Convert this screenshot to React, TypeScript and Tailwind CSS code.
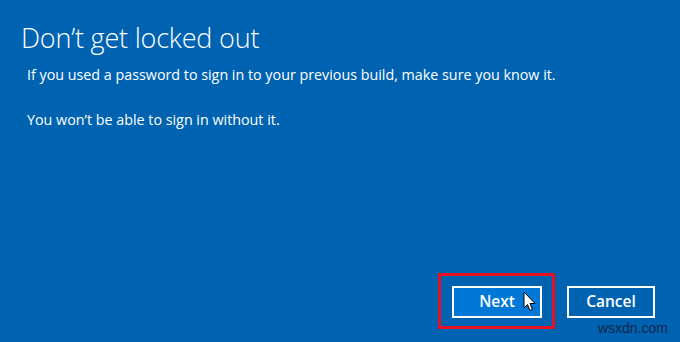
import React from "react";

export default function App() {
  return (
    <div
      className="relative w-[680px] h-[342px] bg-[#0063b1] text-white overflow-hidden flex flex-col"
      style={{ fontFamily: '"Open Sans", "Noto Sans", sans-serif' }}
    >
      <div className="pl-[21px] pt-[19px]">
        <h1 className="text-[27px] leading-[38px] font-light tracking-[-0.2px]">Don’t get locked out</h1>
      </div>
      <div className="pl-[27px] pt-[8px] text-[14.3px] leading-[20px]">
        <p>If you used a password to sign in to your previous build, make sure you know it.</p>
        <p className="mt-[25px]">You won’t be able to sign in without it.</p>
      </div>
      <div className="flex-1" />
      <div className="flex justify-end items-center pr-[25px] pb-[24px] gap-[25px]">
        <div className="relative">
          <button className="w-[90px] h-[32px] bg-[#0078d7] border-2 border-white text-[15.5px] font-semibold">
            Next
          </button>
          <div className="absolute -left-[14px] -top-[13px] w-[117px] h-[56px] border-[3px] border-[#e81123] pointer-events-none" />
          <svg className="absolute left-[71px] top-[5px]" width="14" height="22" viewBox="0 0 14 22">
            <path
              d="M1 1 L1 17 L4.5 13.5 L7 19.5 L9.5 18.5 L7 12.5 L12 12.5 Z"
              fill="white"
              stroke="black"
              strokeWidth="1"
              strokeLinejoin="round"
            />
          </svg>
        </div>
        <button className="w-[88px] h-[32px] border-2 border-white text-[15.5px] font-semibold">Cancel</button>
      </div>
      <div
        className="absolute right-[12px] bottom-[3px] text-[14px] text-[#14244a]"
        style={{ fontFamily: '"Liberation Sans", sans-serif' }}
      >
        wsxdn.com
      </div>
    </div>
  );
}
